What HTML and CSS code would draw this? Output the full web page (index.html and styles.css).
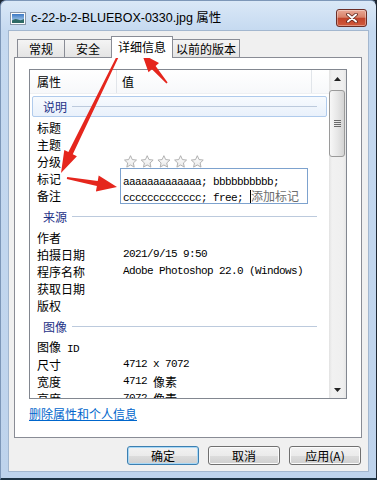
FILE: index.html
```html
<!DOCTYPE html>
<html lang="zh-CN">
<head>
    <meta charset="UTF-8">
    <meta name="viewport" content="width=device-width, initial-scale=1.0">
    <title>属性</title>
    <link rel="stylesheet" href="styles.css">
</head>
<body>
    <div class="window">
        <div class="titlebar">
            <svg class="title-icon" width="16" height="13" viewBox="0 0 16 13">
                <defs>
                    <linearGradient id="sky" x1="0" y1="0" x2="0" y2="1">
                        <stop offset="0" stop-color="#3b78c4"/>
                        <stop offset="1" stop-color="#c9e6f6"/>
                    </linearGradient>
                </defs>
                <rect x="0.5" y="0.5" width="15" height="12" fill="#fdfdfd" stroke="#8796a8"/>
                <rect x="2" y="2" width="12" height="9" fill="url(#sky)"/>
                <path d="M2 8.5 Q5 6 8 7.5 T14 7 V11 H2 Z" fill="#2e6a66"/>
            </svg>
            <span class="title">c-22-b-2-BLUEBOX-0330.jpg 属性</span>
            <div class="close-btn">
                <svg width="12" height="10" viewBox="0 0 12 10">
                    <path d="M2 1.5 L10 8.5 M10 1.5 L2 8.5" stroke="#5b241b" stroke-width="3.6" stroke-linecap="round"/>
                    <path d="M2 1.5 L10 8.5 M10 1.5 L2 8.5" stroke="#fff" stroke-width="2" stroke-linecap="round"/>
                </svg>
            </div>
        </div>

        <div class="client">
            <div class="tabs">
                <div class="tab">常规</div>
                <div class="tab">安全</div>
                <div class="tab active">详细信息</div>
                <div class="tab">以前的版本</div>
            </div>

            <div class="panel">
                <div class="listview">
                    <div class="list-main">
                        <div class="list-header">
                            <div class="col-name">属性</div>
                            <div class="col-value">值</div>
                        </div>
                        <div class="list-body">
                            <div class="group focused"><div class="group-inner">说明</div></div>
                            <div class="row"><span class="row-name">标题</span></div>
                            <div class="row"><span class="row-name">主题</span></div>
                            <div class="row">
                                <span class="row-name">分级</span>
                                <svg class="stars" width="81" height="14" viewBox="0 0 81 14">
                                    <defs>
                                        <linearGradient id="starfill" x1="0" y1="0" x2="0" y2="1">
                                            <stop offset="0" stop-color="#ffffff"/>
                                            <stop offset="1" stop-color="#e9e9e9"/>
                                        </linearGradient>
                                        <symbol id="star" viewBox="0 0 13 13">
                                            <path d="M6.5 0.7 L8.26 4.57 L12.49 5.05 L9.35 7.93 L10.2 12.1 L6.5 10 L2.8 12.1 L3.65 7.93 L0.51 5.05 L4.74 4.57 Z" fill="url(#starfill)" stroke="#a9a9a9" stroke-width="0.9" stroke-linejoin="round"/>
                                        </symbol>
                                    </defs>
                                    <use href="#star" x="0" y="0" width="13" height="13"/>
                                    <use href="#star" x="16.7" y="0" width="13" height="13"/>
                                    <use href="#star" x="33.4" y="0" width="13" height="13"/>
                                    <use href="#star" x="50.1" y="0" width="13" height="13"/>
                                    <use href="#star" x="66.8" y="0" width="13" height="13"/>
                                </svg>
                            </div>
                            <div class="row"><span class="row-name">标记</span></div>
                            <div class="row"><span class="row-name">备注</span></div>

                            <div class="group"><div class="group-inner">来源</div></div>
                            <div class="row"><span class="row-name">作者</span></div>
                            <div class="row"><span class="row-name">拍摄日期</span><span class="mono">2021/9/15 9:50</span></div>
                            <div class="row"><span class="row-name">程序名称</span><span class="mono">Adobe Photoshop 22.0 (Windows)</span></div>
                            <div class="row"><span class="row-name">获取日期</span></div>
                            <div class="row"><span class="row-name">版权</span></div>

                            <div class="group"><div class="group-inner">图像</div></div>
                            <div class="row"><span class="row-name">图像<span class="mono"> ID</span></span></div>
                            <div class="row"><span class="row-name">尺寸</span><span class="mono">4712 x 7072</span></div>
                            <div class="row"><span class="row-name">宽度</span><span class="mono">4712 </span>像素</div>
                            <div class="row"><span class="row-name">高度</span><span class="mono">7072 </span>像素</div>

                            <div class="tag-editor">
                                <div class="tag-line"><span class="mono">aaaaaaaaaaaaa; bbbbbbbbbb;</span></div>
                                <div class="tag-line"><span class="mono">ccccccccccccc; free; </span><span class="caret"></span><span class="hint">添加标记</span></div>
                            </div>
                        </div>
                    </div>
                    <div class="scrollbar">
                        <div class="sb-btn">
                            <svg width="7" height="4" viewBox="0 0 7 4"><path d="M3.5 0 L7 4 H0 Z" fill="#222"/></svg>
                        </div>
                        <div class="sb-thumb">
                            <svg width="7" height="7" viewBox="0 0 7 7">
                                <path d="M0 0.5 H7 M0 2.5 H7 M0 4.5 H7 M0 6.5 H7" stroke="#6a6a6a" stroke-width="1"/>
                            </svg>
                        </div>
                        <div class="sb-track"></div>
                        <div class="sb-btn">
                            <svg width="7" height="4" viewBox="0 0 7 4"><path d="M0 0 H7 L3.5 4 Z" fill="#222"/></svg>
                        </div>
                    </div>
                </div>
                <a class="remove-link" href="#">删除属性和个人信息</a>
            </div>

            <div class="buttons">
                <button class="btn default">确定</button>
                <button class="btn">取消</button>
                <button class="btn">应用(A)</button>
            </div>
        </div>
    </div>

    <!-- red annotation arrows drawn over the dialog -->
    <svg class="arrows" width="377" height="480" viewBox="0 0 377 480">
        <polygon points="117.1,55.6 118.9,56.4 72.8,154.3 76.9,156.3 61,173 64.3,150.1 68.4,152.1"/>
        <polygon points="167.6,82.5 155.6,66 159,63 142,54 148.5,72.2 151.9,69.2 166.4,83.5"/>
        <polygon points="67.2,177 97.7,181 98.7,175.6 117,187 95.9,191.4 96.9,186 66.8,179"/>
    </svg>
</body>
</html>
```

FILE: styles.css
```css
* {
    box-sizing: border-box;
}
body {
    margin: 0;
    width: 377px;
    height: 480px;
    overflow: hidden;
    position: relative;
    font-family: "Noto Sans CJK SC", sans-serif;
    font-size: 12px;
    color: #000;
    background: #1d2733;
}
.window {
    width: 377px;
    height: 480px;
    display: flex;
    flex-direction: column;
    padding: 0 7px 6px;
    border: 1px solid #7d97b8;
    border-right-color: #1d2733;
    border-bottom: 2px solid #1d3344;
    border-radius: 6px 6px 0 0;
    background: linear-gradient(to bottom, #dae8f7 0, #c5d9f0 30px, #bed3ec 100%);
}
.titlebar {
    height: 29px;
    margin: 0 -7px;
    padding: 5px 9px 0;
    display: flex;
    align-items: center;
}
.title-icon {
    margin-right: 5px;
    flex-shrink: 0;
}
.title {
    font-family: "Liberation Sans", "Noto Sans CJK SC", sans-serif;
    font-size: 12.5px;
    line-height: 24px;
}
.close-btn {
    margin-left: auto;
    align-self: flex-start;
    margin-top: 3px;
    width: 31px;
    height: 18px;
    border: 1px solid #6b2e27;
    border-radius: 3px;
    background: linear-gradient(to bottom, #eaa896 0%, #d8826a 45%, #c1442b 52%, #d15a3c 100%);
    box-shadow: inset 0 0 0 1px rgba(255, 255, 255, 0.35);
    display: flex;
    align-items: center;
    justify-content: center;
}
.client {
    flex: 1;
    display: flex;
    flex-direction: column;
    padding: 5px 6px 5px 5px;
    background: #f0f0f0;
    border: 1px solid #a3b7cf;
}
.tabs {
    height: 21px;
    display: flex;
    align-items: flex-end;
    padding-left: 3px;
}
.tab {
    height: 18px;
    min-width: 48px;
    padding: 0 3px;
    margin-left: -1px;
    border: 1px solid #898c95;
    border-bottom: none;
    background: linear-gradient(to bottom, #f4f4f4, #e4e4e4);
    text-align: center;
    line-height: 17px;
}
.tab:first-child {
    margin-left: 0;
}
.tab.active {
    height: 22px;
    margin-bottom: -1px;
    padding: 0 6px;
    background: #fff;
    line-height: 20px;
    position: relative;
    z-index: 1;
}
.panel {
    height: 381px;
    display: flex;
    flex-direction: column;
    padding: 11px 14px 0;
    background: #fff;
    border: 1px solid #898c95;
}
.listview {
    height: 330px;
    display: flex;
    border: 1px solid #828790;
}
.list-main {
    flex: 1;
    display: flex;
    flex-direction: column;
    overflow: hidden;
}
.list-header {
    height: 24px;
    flex-shrink: 0;
    display: flex;
    background: linear-gradient(to bottom, #fff, #f7f8fa);
    border-bottom: 1px solid #eef0f3;
}
.col-name {
    width: 87px;
    padding-left: 7px;
    line-height: 23px;
    border-right: 1px solid #e1e5ea;
}
.col-value {
    width: 195px;
    padding-left: 5px;
    line-height: 23px;
    border-right: 1px solid #e1e5ea;
}
.list-body {
    flex: 1;
    position: relative;
    overflow: hidden;
}
.group {
    height: 25px;
    padding: 2px;
}
.group-inner {
    height: 21px;
    display: flex;
    align-items: center;
    padding: 0 9px 0 10px;
    border: 1px solid transparent;
    border-radius: 2px;
    color: #1e3287;
}
.group-inner::after {
    content: "";
    flex: 1;
    height: 1px;
    margin-left: 5px;
    background: #bccadd;
}
.group.focused .group-inner {
    border-color: #b0cbec;
    background: linear-gradient(to bottom, #f7fafe, #e9f1fb);
}
.row {
    height: 17px;
    display: flex;
    align-items: center;
    padding-left: 7px;
    line-height: 17px;
    white-space: nowrap;
}
.row-name {
    width: 86px;
    flex-shrink: 0;
}
.mono {
    font-family: "Liberation Mono", monospace;
    font-size: 11px;
    letter-spacing: -0.6px;
    white-space: pre;
}
.stars {
    margin-left: 1px;
}
.tag-editor {
    position: absolute;
    left: 90px;
    top: 74px;
    width: 188px;
    height: 36px;
    padding: 3px 0 0 2px;
    background: #fff;
    border: 1px solid #7da2ce;
}
.tag-line {
    height: 16px;
    line-height: 16px;
    white-space: nowrap;
}
.caret {
    display: inline-block;
    width: 1px;
    height: 13px;
    margin-left: 1px;
    vertical-align: -2px;
    background: #000;
}
.hint {
    color: #6d6d6d;
}
.scrollbar {
    width: 17px;
    display: flex;
    flex-direction: column;
    background: linear-gradient(to right, #e2e2e2, #f1f1f1 3px, #efefef 14px, #e6e6e6);
}
.sb-btn {
    height: 17px;
    display: flex;
    align-items: center;
    justify-content: center;
}
.sb-thumb {
    height: 67px;
    margin: 3px 1px 0 0;
    border: 1px solid #9a9a9a;
    border-radius: 3px;
    background: linear-gradient(to right, #f7f7f7, #e6e6e6 55%, #d4d4d4);
    display: flex;
    align-items: center;
    justify-content: center;
}
.sb-track {
    flex: 1;
}
.remove-link {
    align-self: flex-start;
    margin-top: 7px;
    line-height: 16px;
    color: #0066cc;
    text-decoration: underline;
}
.buttons {
    display: flex;
    justify-content: flex-end;
    gap: 9px;
    margin-top: 8px;
    padding-right: 1px;
}
.btn {
    width: 72px;
    height: 19px;
    padding: 0;
    font-family: "Noto Sans CJK SC", sans-serif;
    font-size: 12px;
    line-height: 17px;
    color: #000;
    border: 1px solid #707070;
    border-radius: 3px;
    background: linear-gradient(to bottom, #f2f2f2 0%, #ebebeb 50%, #dddddd 51%, #cfcfcf 100%);
    box-shadow: inset 0 0 0 1px #fbfbfb;
}
.btn.default {
    border-color: #3c7fb1;
    box-shadow: inset 0 0 0 1px #a8d8f6;
}
.arrows {
    position: absolute;
    left: 0;
    top: 0;
    pointer-events: none;
    fill: #e5261d;
}
```
